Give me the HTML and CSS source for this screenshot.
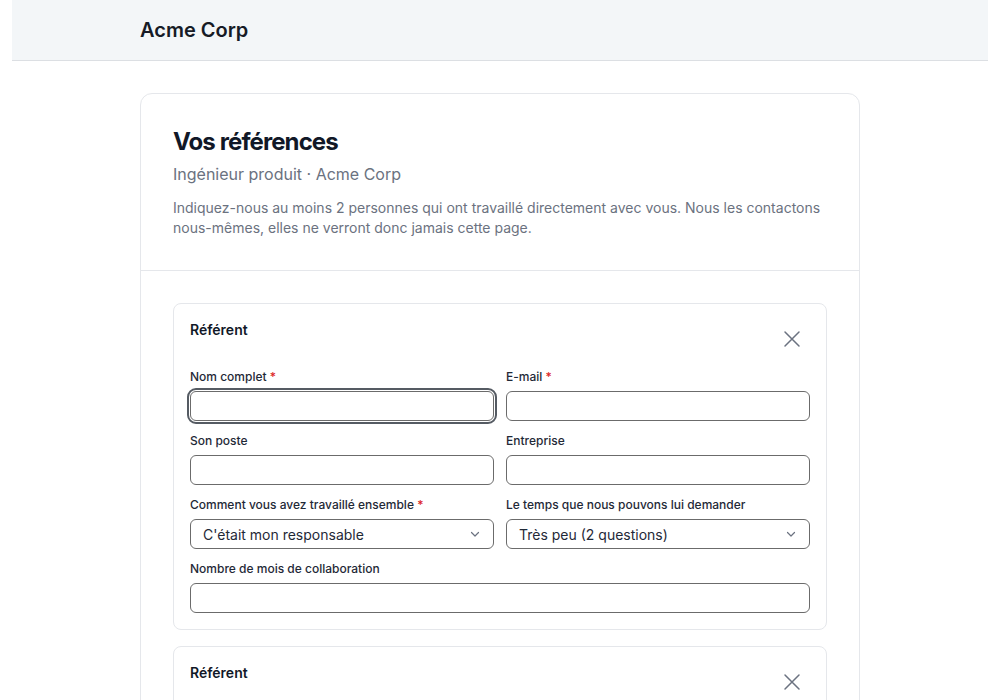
FILE: index.html
```html
<!DOCTYPE html>
<html lang="fr">
<head>
    <meta charset="UTF-8">
    <meta name="viewport" content="width=device-width, initial-scale=1.0">
    <title>Vos références - Acme Corp</title>
    <link rel="stylesheet" href="styles.css">
</head>
<body>
    <header class="topbar">
        <div class="topbar-inner">Acme Corp</div>
    </header>

    <main class="page">
        <section class="panel">
            <div class="panel-head">
                <h1>Vos références</h1>
                <p class="subtitle">Ingénieur produit · Acme Corp</p>
                <p class="intro">Indiquez-nous au moins 2 personnes qui ont travaillé directement avec vous. Nous les contactons nous-mêmes, elles ne verront donc jamais cette page.</p>
            </div>

            <div class="panel-body">
                <div class="ref-card">
                    <div class="ref-head">
                        <h2>Référent</h2>
                        <button class="remove" aria-label="Supprimer">
                            <svg width="18" height="18" viewBox="0 0 18 18" fill="none" stroke="#6b7280" stroke-width="1.5" stroke-linecap="round"><path d="M2 2l14 14M16 2L2 16"/></svg>
                        </button>
                    </div>
                    <div class="fields">
                        <label class="field">
                            <span class="label">Nom complet <em>*</em></span>
                            <input type="text" class="input focused">
                        </label>
                        <label class="field">
                            <span class="label">E-mail <em>*</em></span>
                            <input type="email" class="input">
                        </label>
                        <label class="field">
                            <span class="label">Son poste</span>
                            <input type="text" class="input">
                        </label>
                        <label class="field">
                            <span class="label">Entreprise</span>
                            <input type="text" class="input">
                        </label>
                        <label class="field">
                            <span class="label">Comment vous avez travaillé ensemble <em>*</em></span>
                            <div class="select">
                                <span>C'était mon responsable</span>
                                <svg width="12" height="12" viewBox="0 0 12 12" fill="none" stroke="#6b7280" stroke-width="1.2" stroke-linecap="round" stroke-linejoin="round"><path d="M2.5 4.5L6 8l3.5-3.5"/></svg>
                            </div>
                        </label>
                        <label class="field">
                            <span class="label">Le temps que nous pouvons lui demander</span>
                            <div class="select">
                                <span>Très peu (2 questions)</span>
                                <svg width="12" height="12" viewBox="0 0 12 12" fill="none" stroke="#6b7280" stroke-width="1.2" stroke-linecap="round" stroke-linejoin="round"><path d="M2.5 4.5L6 8l3.5-3.5"/></svg>
                            </div>
                        </label>
                        <label class="field wide">
                            <span class="label">Nombre de mois de collaboration</span>
                            <input type="text" class="input">
                        </label>
                    </div>
                </div>

                <div class="ref-card">
                    <div class="ref-head">
                        <h2>Référent</h2>
                        <button class="remove" aria-label="Supprimer">
                            <svg width="18" height="18" viewBox="0 0 18 18" fill="none" stroke="#6b7280" stroke-width="1.5" stroke-linecap="round"><path d="M2 2l14 14M16 2L2 16"/></svg>
                        </button>
                    </div>
                    <div class="fields">
                        <label class="field">
                            <span class="label">Nom complet <em>*</em></span>
                            <input type="text" class="input">
                        </label>
                        <label class="field">
                            <span class="label">E-mail <em>*</em></span>
                            <input type="email" class="input">
                        </label>
                    </div>
                </div>
            </div>
        </section>
    </main>
</body>
</html>
```

FILE: styles.css
```css
body {
    margin: 0;
    font-family: 'Inter', 'Noto Sans', Arial, sans-serif;
    color: #111827;
    background: #ffffff;
}

.topbar {
    margin: 0 12px;
    height: 61px;
    background: #f3f6f8;
    border-bottom: 1px solid #dcdfe3;
    box-sizing: border-box;
}

.topbar-inner {
    max-width: 720px;
    margin: 0 auto;
    line-height: 60px;
    font-size: 20px;
    font-weight: 600;
    color: #161b26;
}

.page {
    max-width: 720px;
    margin: 32px auto 0;
}

.panel {
    border: 1px solid #e5e7eb;
    border-radius: 12px;
    background: #ffffff;
}

.panel-head {
    padding: 32px;
    border-bottom: 1px solid #e5e7eb;
}

h1 {
    margin: 0;
    font-size: 24px;
    line-height: 32px;
    font-weight: 700;
    letter-spacing: -0.9px;
    color: #111827;
}

.subtitle {
    margin: 4px 0 12px;
    font-size: 16px;
    line-height: 24px;
    color: #6b7280;
}

.intro {
    margin: 0;
    font-size: 14px;
    line-height: 20px;
    color: #6b7280;
}

.panel-body {
    padding: 32px;
    display: flex;
    flex-direction: column;
    gap: 16px;
}

.ref-card {
    border: 1px solid #e5e7eb;
    border-radius: 8px;
    padding: 16px;
}

.ref-head {
    display: flex;
    justify-content: space-between;
    align-items: flex-start;
    margin-bottom: 11px;
}

h2 {
    margin: 0;
    font-size: 14px;
    line-height: 20px;
    font-weight: 600;
    color: #111827;
}

.remove {
    width: 38px;
    height: 38px;
    margin-right: -1px;
    padding: 0;
    border: none;
    background: none;
    display: flex;
    align-items: center;
    justify-content: center;
    cursor: pointer;
}

.fields {
    display: grid;
    grid-template-columns: 1fr 1fr;
    gap: 12px;
}

.field {
    display: flex;
    flex-direction: column;
    gap: 6px;
}

.field.wide {
    grid-column: span 2;
}

.label {
    font-size: 12px;
    line-height: 16px;
    font-weight: 500;
    color: #1f2937;
}

.label em {
    font-style: normal;
    color: #dc2626;
}

.input,
.select {
    box-sizing: border-box;
    height: 30px;
    width: 100%;
    border: 1px solid #6b6b6b;
    border-radius: 6px;
    background: #ffffff;
    font-family: inherit;
    font-size: 14px;
}

.input.focused {
    outline: 2px solid #555b63;
    outline-offset: 1px;
}

.select {
    display: flex;
    align-items: center;
    justify-content: space-between;
    padding: 0 12px 0 12px;
    color: #1f2937;
}
```
